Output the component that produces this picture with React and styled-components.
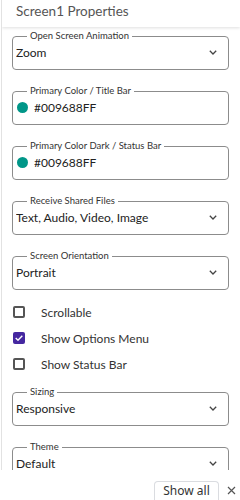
import React from "react";
import styled, { createGlobalStyle } from "styled-components";

const Global = createGlobalStyle`
  html, body { margin: 0; padding: 0; background: #fff; }
  body { font-family: Lato, "Noto Sans", sans-serif; color: #222; }
  * { box-sizing: border-box; }
`;

const Page = styled.div`
  width: 240px;
  height: 500px;
  display: flex;
  flex-direction: column;
  overflow: hidden;
`;

const Panel = styled.div`
  height: 470px;
  margin-left: 1px;
  border-left: 1px solid #e2e2e2;
  overflow: hidden;
  display: flex;
  flex-direction: column;
`;

const Header = styled.div`
  height: 27px;
  flex: none;
  display: flex;
  align-items: center;
  padding: 0 0 5px 14px;
  font-size: 13.5px;
  color: #555;
  box-shadow: 0 1px 3px rgba(0, 0, 0, 0.13);
  position: relative;
  z-index: 1;
`;

const Body = styled.div`
  display: flex;
  flex-direction: column;
  padding: 3px 11px 0 10px;
`;

const Field = styled.fieldset`
  margin: 0 0 15px 0;
  padding: 0 5px 7px 3px;
  border: 1px solid #8c8c8c;
  border-radius: 4px;
  min-width: 0;
`;

const Legend = styled.legend`
  margin-left: 11px;
  padding: 0 3px;
  font-size: 9.5px;
  line-height: 12px;
  color: #333;
`;

const Row = styled.div`
  height: 20px;
  display: flex;
  align-items: center;
  font-size: 12px;
  color: #222;
`;

const Value = styled.span`
  flex: 1;
  white-space: nowrap;
  overflow: hidden;
`;

const Dot = styled.span`
  width: 11px;
  height: 11px;
  border-radius: 50%;
  background: ${(p) => p.$color};
  margin: 0 6px 0 1px;
  flex: none;
`;

const Chevron = () => (
  <svg width="8" height="5" viewBox="0 0 8 5" style={{ flex: "none", marginRight: 6 }}>
    <polyline points="0.8,0.8 4,4 7.2,0.8" fill="none" stroke="#444" strokeWidth="1.3" />
  </svg>
);

const Checks = styled.div`
  display: flex;
  flex-direction: column;
  gap: 6px;
  padding: 0 0 0 1px;
  margin: -3px 0 12px 0;
`;

const CheckRow = styled.label`
  height: 20px;
  display: flex;
  align-items: center;
  font-size: 12px;
  color: #333;
`;

const Box = styled.span`
  width: 12px;
  height: 12px;
  border-radius: 2px;
  margin-right: 16px;
  flex: none;
  display: flex;
  align-items: center;
  justify-content: center;
  border: ${(p) => (p.$on ? "none" : "2px solid #555")};
  background: ${(p) => (p.$on ? "#4527a0" : "#fff")};
`;

const Bar = styled.div`
  height: 30px;
  flex: none;
  display: flex;
  align-items: flex-end;
  justify-content: flex-end;
  padding-right: 3px;
  background: #fff;
`;

const ShowAll = styled.button`
  height: 19px;
  width: 65px;
  margin-right: 6px;
  border: 1px solid #dadce0;
  border-bottom: none;
  border-radius: 4px 4px 0 0;
  background: #fff;
  font-family: "Segoe UI", "Noto Sans", sans-serif;
  font-size: 12px;
  line-height: 18px;
  color: #333;
  padding: 0;
`;

const Close = styled.span`
  width: 12px;
  height: 19px;
  display: flex;
  align-items: center;
  justify-content: center;
`;

function Select({ label, value }) {
  return (
    <Field>
      <Legend>{label}</Legend>
      <Row>
        <Value>{value}</Value>
        <Chevron />
      </Row>
    </Field>
  );
}

function ColorField({ label, color, text }) {
  return (
    <Field>
      <Legend>{label}</Legend>
      <Row>
        <Dot $color={color} />
        <Value>{text}</Value>
      </Row>
    </Field>
  );
}

function Check({ on, children }) {
  return (
    <CheckRow>
      <Box $on={on}>
        {on && (
          <svg width="8" height="6" viewBox="0 0 8 6">
            <polyline points="0.7,3 3,5.2 7.3,0.8" fill="none" stroke="#fff" strokeWidth="1.4" />
          </svg>
        )}
      </Box>
      {children}
    </CheckRow>
  );
}

export default function App() {
  return (
    <Page>
      <Global />
      <Panel>
        <Header>Screen1 Properties</Header>
        <Body>
          <Select label="Open Screen Animation" value="Zoom" />
          <ColorField label="Primary Color / Title Bar" color="#009688" text="#009688FF" />
          <ColorField label="Primary Color Dark / Status Bar" color="#009688" text="#009688FF" />
          <Select label="Receive Shared Files" value="Text, Audio, Video, Image" />
          <Select label="Screen Orientation" value="Portrait" />
          <Checks>
            <Check>Scrollable</Check>
            <Check on>Show Options Menu</Check>
            <Check>Show Status Bar</Check>
          </Checks>
          <Select label="Sizing" value="Responsive" />
          <Select label="Theme" value="Default" />
        </Body>
      </Panel>
      <Bar>
        <ShowAll>Show all</ShowAll>
        <Close>
          <svg width="9" height="9" viewBox="0 0 9 9">
            <path d="M1 1L8 8M8 1L1 8" stroke="#555" strokeWidth="1.2" />
          </svg>
        </Close>
      </Bar>
    </Page>
  );
}
